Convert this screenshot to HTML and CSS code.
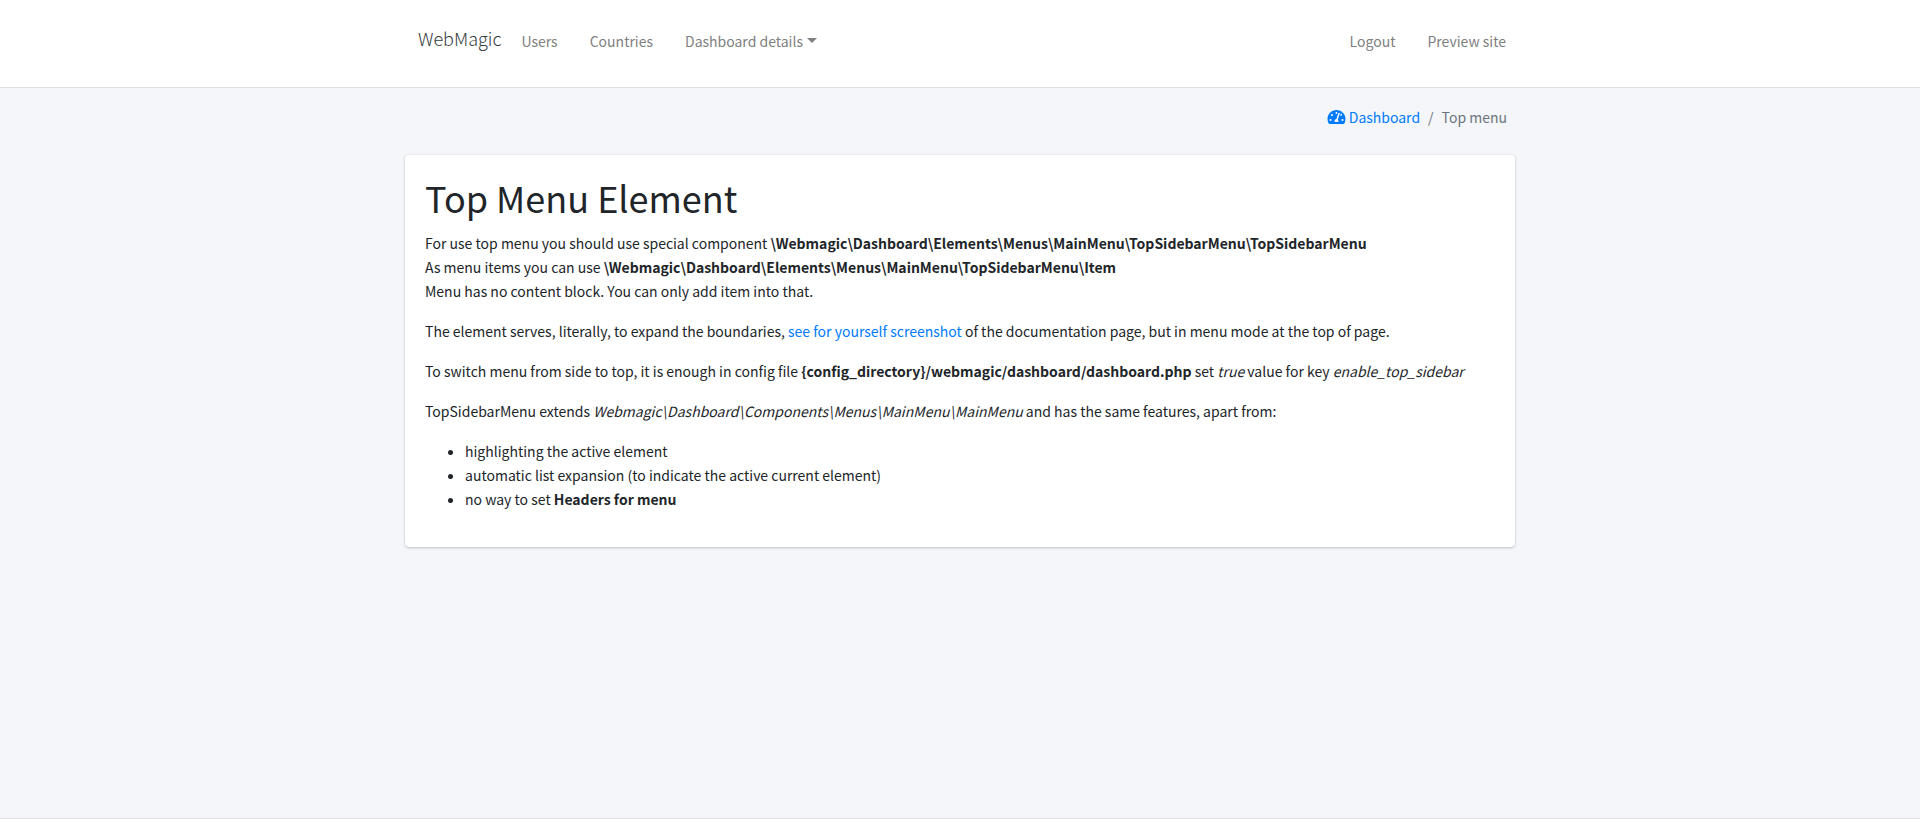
FILE: index.html
```html
<!DOCTYPE html>
<html lang="en">
<head>
<meta charset="utf-8">
<meta name="viewport" content="width=device-width, initial-scale=1">
<title>Top menu</title>
<link rel="stylesheet" href="styles.css">
</head>
<body>
<header class="header">
  <nav class="navbar">
    <a class="brand" href="#">WebMagic</a>
    <ul class="nav">
      <li><a class="nav-link" href="#">Users</a></li>
      <li><a class="nav-link" href="#">Countries</a></li>
      <li><button class="nav-link dropdown" type="button">Dashboard details</button></li>
    </ul>
    <ul class="nav nav-end">
      <li><a class="nav-link" href="#">Logout</a></li>
      <li><a class="nav-link" href="#">Preview site</a></li>
    </ul>
  </nav>
</header>
<main class="content">
  <div class="container">
    <ol class="breadcrumb">
      <li><a class="link crumb" href="#"><svg class="icon" viewBox="0 0 576 448" aria-hidden="true"><path fill="currentColor" fill-rule="evenodd" d="M288 0C129 0 0 129 0 288c0 53 14 102 39 145 6 10 16 15 28 15h442c12 0 22-5 28-15 25-43 39-92 39-145C576 129 447 0 288 0zm0 64c14 0 25 10 30 23-1 2-2 3-3 5l-9 28c-5 5-11 8-18 8-18 0-32-14-32-32s14-32 32-32zM96 352c-18 0-32-14-32-32s14-32 32-32 32 14 32 32-14 32-32 32zm48-160c-18 0-32-14-32-32s14-32 32-32 32 14 32 32-14 32-32 32zm247-73-61 184c13 12 22 28 22 49 0 12-4 23-9 32H233c-5-9-9-20-9-32 0-34 27-62 60-64l61-184c4-13 18-20 31-15 12 4 19 17 15 30zm15 51 16-47c3-1 7-2 10-2 18 0 32 14 32 32s-14 32-32 32c-11 0-20-6-26-15zm74 182c-18 0-32-14-32-32s14-32 32-32 32 14 32 32-14 32-32 32z"/></svg>Dashboard</a></li>
      <li class="current">Top menu</li>
    </ol>
    <section class="card">
      <h1>Top Menu Element</h1>
      <p>For use top menu you should use special component <b>\Webmagic\Dashboard\Elements\Menus\MainMenu\TopSidebarMenu\TopSidebarMenu</b><br>
      As menu items you can use <b>\Webmagic\Dashboard\Elements\Menus\MainMenu\TopSidebarMenu\Item</b><br>
      Menu has no content block. You can only add item into that.</p>
      <p>The element serves, literally, to expand the boundaries, <a class="link" href="#">see for yourself screenshot</a> of the documentation page, but in menu mode at the top of page.</p>
      <p>To switch menu from side to top, it is enough in config file <b>{config_directory}/webmagic/dashboard/dashboard.php</b> set <i>true</i> value for key <i>enable_top_sidebar</i></p>
      <p>TopSidebarMenu extends <i>Webmagic\Dashboard\Components\Menus\MainMenu\MainMenu</i> and has the same features, apart from:</p>
      <ul class="features">
        <li>highlighting the active element</li>
        <li>automatic list expansion (to indicate the active current element)</li>
        <li>no way to set <b>Headers for menu</b></li>
      </ul>
    </section>
  </div>
</main>
<footer class="footer"></footer>
</body>
</html>
```
FILE: styles.css
```css
* { box-sizing: border-box; }

body {
  margin: 0;
  min-height: 100vh;
  display: flex;
  flex-direction: column;
  font-family: "Source Sans Pro", "Noto Sans CJK SC", sans-serif;
  font-size: 14px;
  line-height: 24px;
  color: #212529;
  background: #f4f6f9;
}

.header {
  background: #fff;
  border-bottom: 1px solid #dee2e6;
  padding: 21px 0 26px;
}

.navbar, .container {
  width: 100%;
  max-width: 1140px;
  margin: 0 auto;
}

.navbar {
  display: flex;
  align-items: center;
  padding: 0 8px 0 28px;
}

.brand {
  font-size: 18px;
  font-weight: 300;
  line-height: 30px;
  padding-bottom: 6px;
  margin-right: 4px;
  color: #343a40;
  text-decoration: none;
}

.nav {
  display: flex;
  list-style: none;
  margin: 0;
  padding: 0;
}

.nav-end { margin-left: auto; }

.nav-link {
  display: flex;
  align-items: center;
  padding: 8px 16px;
  border: 0;
  background: none;
  font: inherit;
  color: #808080;
  text-decoration: none;
}

.dropdown::after {
  content: "";
  margin-left: 4px;
  margin-bottom: 2px;
  border: 5px solid transparent;
  border-top-color: currentColor;
  border-bottom: 0;
}

.content { flex: 1; }

.container { padding: 0 15px; }

.breadcrumb {
  display: flex;
  justify-content: flex-end;
  list-style: none;
  margin: 0;
  padding: 17px 8px 26px;
}

.crumb {
  display: flex;
  align-items: center;
  gap: 3px;
}

.icon {
  width: 19px;
  height: 14px;
}

.current { color: #6c757d; }

.current::before {
  content: "/";
  padding: 0 8px;
}

.link {
  color: #007bff;
  text-decoration: none;
}

.card {
  padding: 20px;
  background: #fff;
  border-radius: 4px;
  box-shadow: 0 0 1px rgba(0, 0, 0, .125), 0 1px 3px rgba(0, 0, 0, .2);
}

h1 {
  margin: 0 0 12px;
  font-size: 36px;
  font-weight: 400;
  line-height: 44px;
}

p { margin: 0 0 16px; }

.features {
  margin: 0 0 16px;
  padding-left: 40px;
}

.footer {
  height: 21px;
  background: #fff;
  border-top: 1px solid #dee2e6;
}
```
